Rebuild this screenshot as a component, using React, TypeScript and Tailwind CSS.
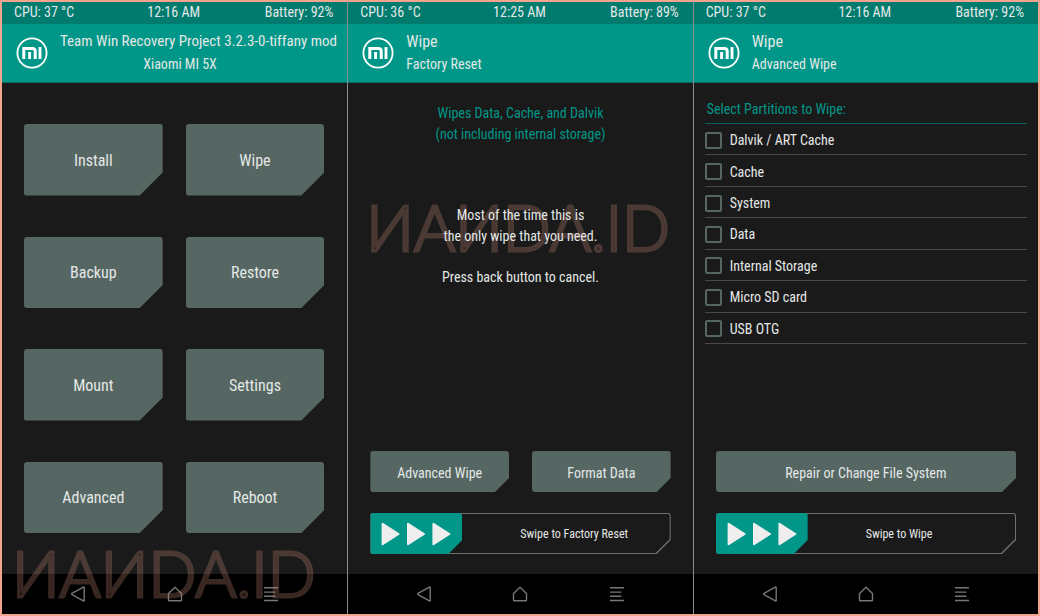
import { useId, useState, type ReactNode } from "react"

interface ScreenProps {
  cpu: string
  time: string
  battery: string
  title: string
  subtitle: string
  home?: boolean
  children: ReactNode
}

const menu = ["Install", "Wipe", "Backup", "Restore", "Mount", "Settings", "Advanced", "Reboot"]

const partitions = [
  "Dalvik / ART Cache",
  "Cache",
  "System",
  "Data",
  "Internal Storage",
  "Micro SD card",
  "USB OTG",
]

const MiLogo = () => (
  <svg className="h-8 w-8 shrink-0" viewBox="0 0 32 32" fill="none" stroke="#fff" aria-hidden="true">
    <circle cx="16" cy="16" r="14.6" strokeWidth="1.8" />
    <path d="M7.8 22V11.4H16.4Q19.2 11.4 19.2 14.2V22" strokeWidth="3" />
    <path d="M13.6 15V22M24 9.9V22" strokeWidth="2.9" />
  </svg>
)

const NavBar = () => (
  <nav className="flex h-10 items-center justify-between bg-black px-[68px]">
    <button aria-label="Back">
      <svg className="h-4 w-4" viewBox="0 0 16 16" fill="none" stroke="#777" strokeWidth="1.4" strokeLinejoin="round" aria-hidden="true">
        <path d="M14.2 1.6Q14.2 .8 13.4 1.2L2 7.4Q1.2 8 2 8.6L13.4 14.8Q14.2 15.2 14.2 14.4Z" />
      </svg>
    </button>
    <button aria-label="Home">
      <svg className="h-4 w-4" viewBox="0 0 16 16" fill="none" stroke="#777" strokeWidth="1.4" strokeLinejoin="round" aria-hidden="true">
        <path d="M1.5 7.6L8 1.2L14.5 7.6V14Q14.5 14.8 13.7 14.8H2.3Q1.5 14.8 1.5 14Z" />
      </svg>
    </button>
    <button aria-label="Console">
      <svg className="h-4 w-4" viewBox="0 0 16 16" fill="none" stroke="#777" strokeWidth="1.4" aria-hidden="true">
        <path d="M1 1.7H15M1 6.1H12.4M1 10.3H12.4M1 14.5H15" />
      </svg>
    </button>
  </nav>
)

const Screen = ({ cpu, time, battery, title, subtitle, home, children }: ScreenProps) => (
  <section className="relative flex min-w-0 flex-col border-l border-[#8c8c8c] bg-[#1a1a1a] first:border-l-0">
    <div className="grid h-[22px] grid-cols-3 items-center bg-[#007b6e] pr-[14px] pb-0.5 pl-3 text-sm">
      <span>{cpu}</span>
      <span className="text-center">{time}</span>
      <span className="text-right">{battery}</span>
    </div>
    <header className="flex h-[59px] items-center gap-3 border-b border-[#0a6f65] bg-[#009788] pb-px pl-[14px]">
      <MiLogo />
      <div className="whitespace-nowrap">
        <h1 className={home ? "text-[15px] leading-[23px]" : "text-base leading-[23px]"}>{title}</h1>
        <p className={home ? "w-60 text-center text-sm leading-[23px]" : "text-sm leading-[23px]"}>{subtitle}</p>
      </div>
    </header>
    <main className="flex flex-1 flex-col">{children}</main>
    <NavBar />
  </section>
)

const ActionButton = ({ children }: { children: ReactNode }) => (
  <button className="h-[41px] flex-1 rounded-[3px] bg-[#566662] pt-0.5 text-sm [clip-path:polygon(0_0,100%_0,100%_calc(100%-14px),calc(100%-14px)_100%,0_100%)]">
    {children}
  </button>
)

const SwipeBar = ({ label }: { label: string }) => {
  const id = useId()
  const [value, setValue] = useState(0)

  return (
    <div className="relative flex h-[41px] items-center gap-[58px] rounded-[3px] bg-[#707070] [clip-path:polygon(0_0,100%_0,100%_calc(100%-14px),calc(100%-14px)_100%,0_100%)]">
      <div className="absolute inset-px rounded-[2px] bg-[#1a1a1a] [clip-path:polygon(0_0,100%_0,100%_calc(100%-14px),calc(100%-14px)_100%,0_100%)]" />
      <div className="relative flex h-full w-[92px] items-center justify-center rounded-[3px] bg-[#009788] [clip-path:polygon(0_0,100%_0,100%_calc(100%-14px),calc(100%-14px)_100%,0_100%)]">
        <svg className="h-6 w-[70px]" viewBox="0 0 70 24" fill="#eee" stroke="#eee" strokeWidth="2" strokeLinejoin="round" aria-hidden="true">
          <path d="M1.6 1.8L17.6 12L1.6 22.2Z" />
          <path d="M27 1.8L43 12L27 22.2Z" />
          <path d="M52.4 1.8L68.4 12L52.4 22.2Z" />
        </svg>
      </div>
      <label htmlFor={id} className="relative text-xs">{label}</label>
      <input
        id={id}
        type="range"
        value={value}
        onChange={(e) => setValue(Number(e.target.value))}
        className="absolute inset-0 h-full w-full cursor-pointer opacity-0"
      />
    </div>
  )
}

const Watermark = ({ className }: { className: string }) => (
  <div
    aria-hidden="true"
    className={`pointer-events-none absolute whitespace-nowrap font-[Lato,sans-serif] text-[63px] leading-none font-light text-[#be826e]/40 opacity-30 [-webkit-text-stroke:3px_#be826e] ${className}`}
  >
    ИAИDA.ID
  </div>
)

const App = () => {
  const [selected, setSelected] = useState<string[]>([])

  const toggle = (name: string) => {
    setSelected((prev) => (prev.includes(name) ? prev.filter((p) => p !== name) : [...prev, name]))
  }

  return (
    <div className="grid min-h-screen grid-cols-3 border-2 border-[#f3a48e] bg-[#1a1a1a] font-['Roboto_Condensed','Liberation_Sans_Narrow',Roboto,sans-serif] text-[#e4e8e7]">
      <Screen cpu="CPU: 37 °C" time="12:16 AM" battery="Battery: 92%" title="Team Win Recovery Project 3.2.3-0-tiffany mod" subtitle="Xiaomi MI 5X" home>
        <div className="grid flex-1 grid-cols-2 gap-x-[23px] gap-y-[41px] py-[41px] pr-[23px] pl-[22px]">
          {menu.map((item) => (
            <button
              key={item}
              className="rounded-[3px] bg-[#566662] pt-0.5 text-base [clip-path:polygon(0_0,100%_0,100%_calc(100%-23px),calc(100%-23px)_100%,0_100%)]"
            >
              {item}
            </button>
          ))}
        </div>
        <Watermark className="bottom-2.5 left-2.5" />
      </Screen>

      <Screen cpu="CPU: 36 °C" time="12:25 AM" battery="Battery: 89%" title="Wipe" subtitle="Factory Reset">
        <div className="flex flex-1 flex-col px-[22px] pt-5 pb-5">
          <p className="text-center text-sm leading-[21px] text-[#009788]">
            Wipes Data, Cache, and Dalvik
            <br />
            (not including internal storage)
          </p>
          <div className="relative mt-[60px] text-center text-sm leading-[21px]">
            <Watermark className="-top-2.5 -left-1" />
            <p className="relative">
              Most of the time this is
              <br />
              the only wipe that you need.
            </p>
            <p className="mt-5">Press back button to cancel.</p>
          </div>
          <div className="mt-auto flex flex-col gap-[21px]">
            <div className="flex gap-[23px]">
              <ActionButton>Advanced Wipe</ActionButton>
              <ActionButton>Format Data</ActionButton>
            </div>
            <SwipeBar label="Swipe to Factory Reset" />
          </div>
        </div>
      </Screen>

      <Screen cpu="CPU: 37 °C" time="12:16 AM" battery="Battery: 92%" title="Wipe" subtitle="Advanced Wipe">
        <fieldset className="mx-[11px] mt-4">
          <legend className="w-full border-b border-[#0b6158] px-0.5 pb-1 text-sm text-[#009788]">
            Select Partitions to Wipe:
          </legend>
          <div className="grid h-[220px] grid-rows-7">
            {partitions.map((name) => (
              <label key={name} className="flex items-center gap-2 border-b border-[#4a4a4a] pt-0.5 text-sm">
                <input
                  type="checkbox"
                  checked={selected.includes(name)}
                  onChange={() => toggle(name)}
                  className="h-[17px] w-[17px] appearance-none rounded-[2px] border-2 border-[#566662] checked:bg-[#009788]"
                />
                {name}
              </label>
            ))}
          </div>
        </fieldset>
        <div className="mt-auto flex flex-col gap-[21px] px-[22px] pb-5">
          <div className="flex">
            <ActionButton>Repair or Change File System</ActionButton>
          </div>
          <SwipeBar label="Swipe to Wipe" />
        </div>
      </Screen>
    </div>
  )
}

export default App
